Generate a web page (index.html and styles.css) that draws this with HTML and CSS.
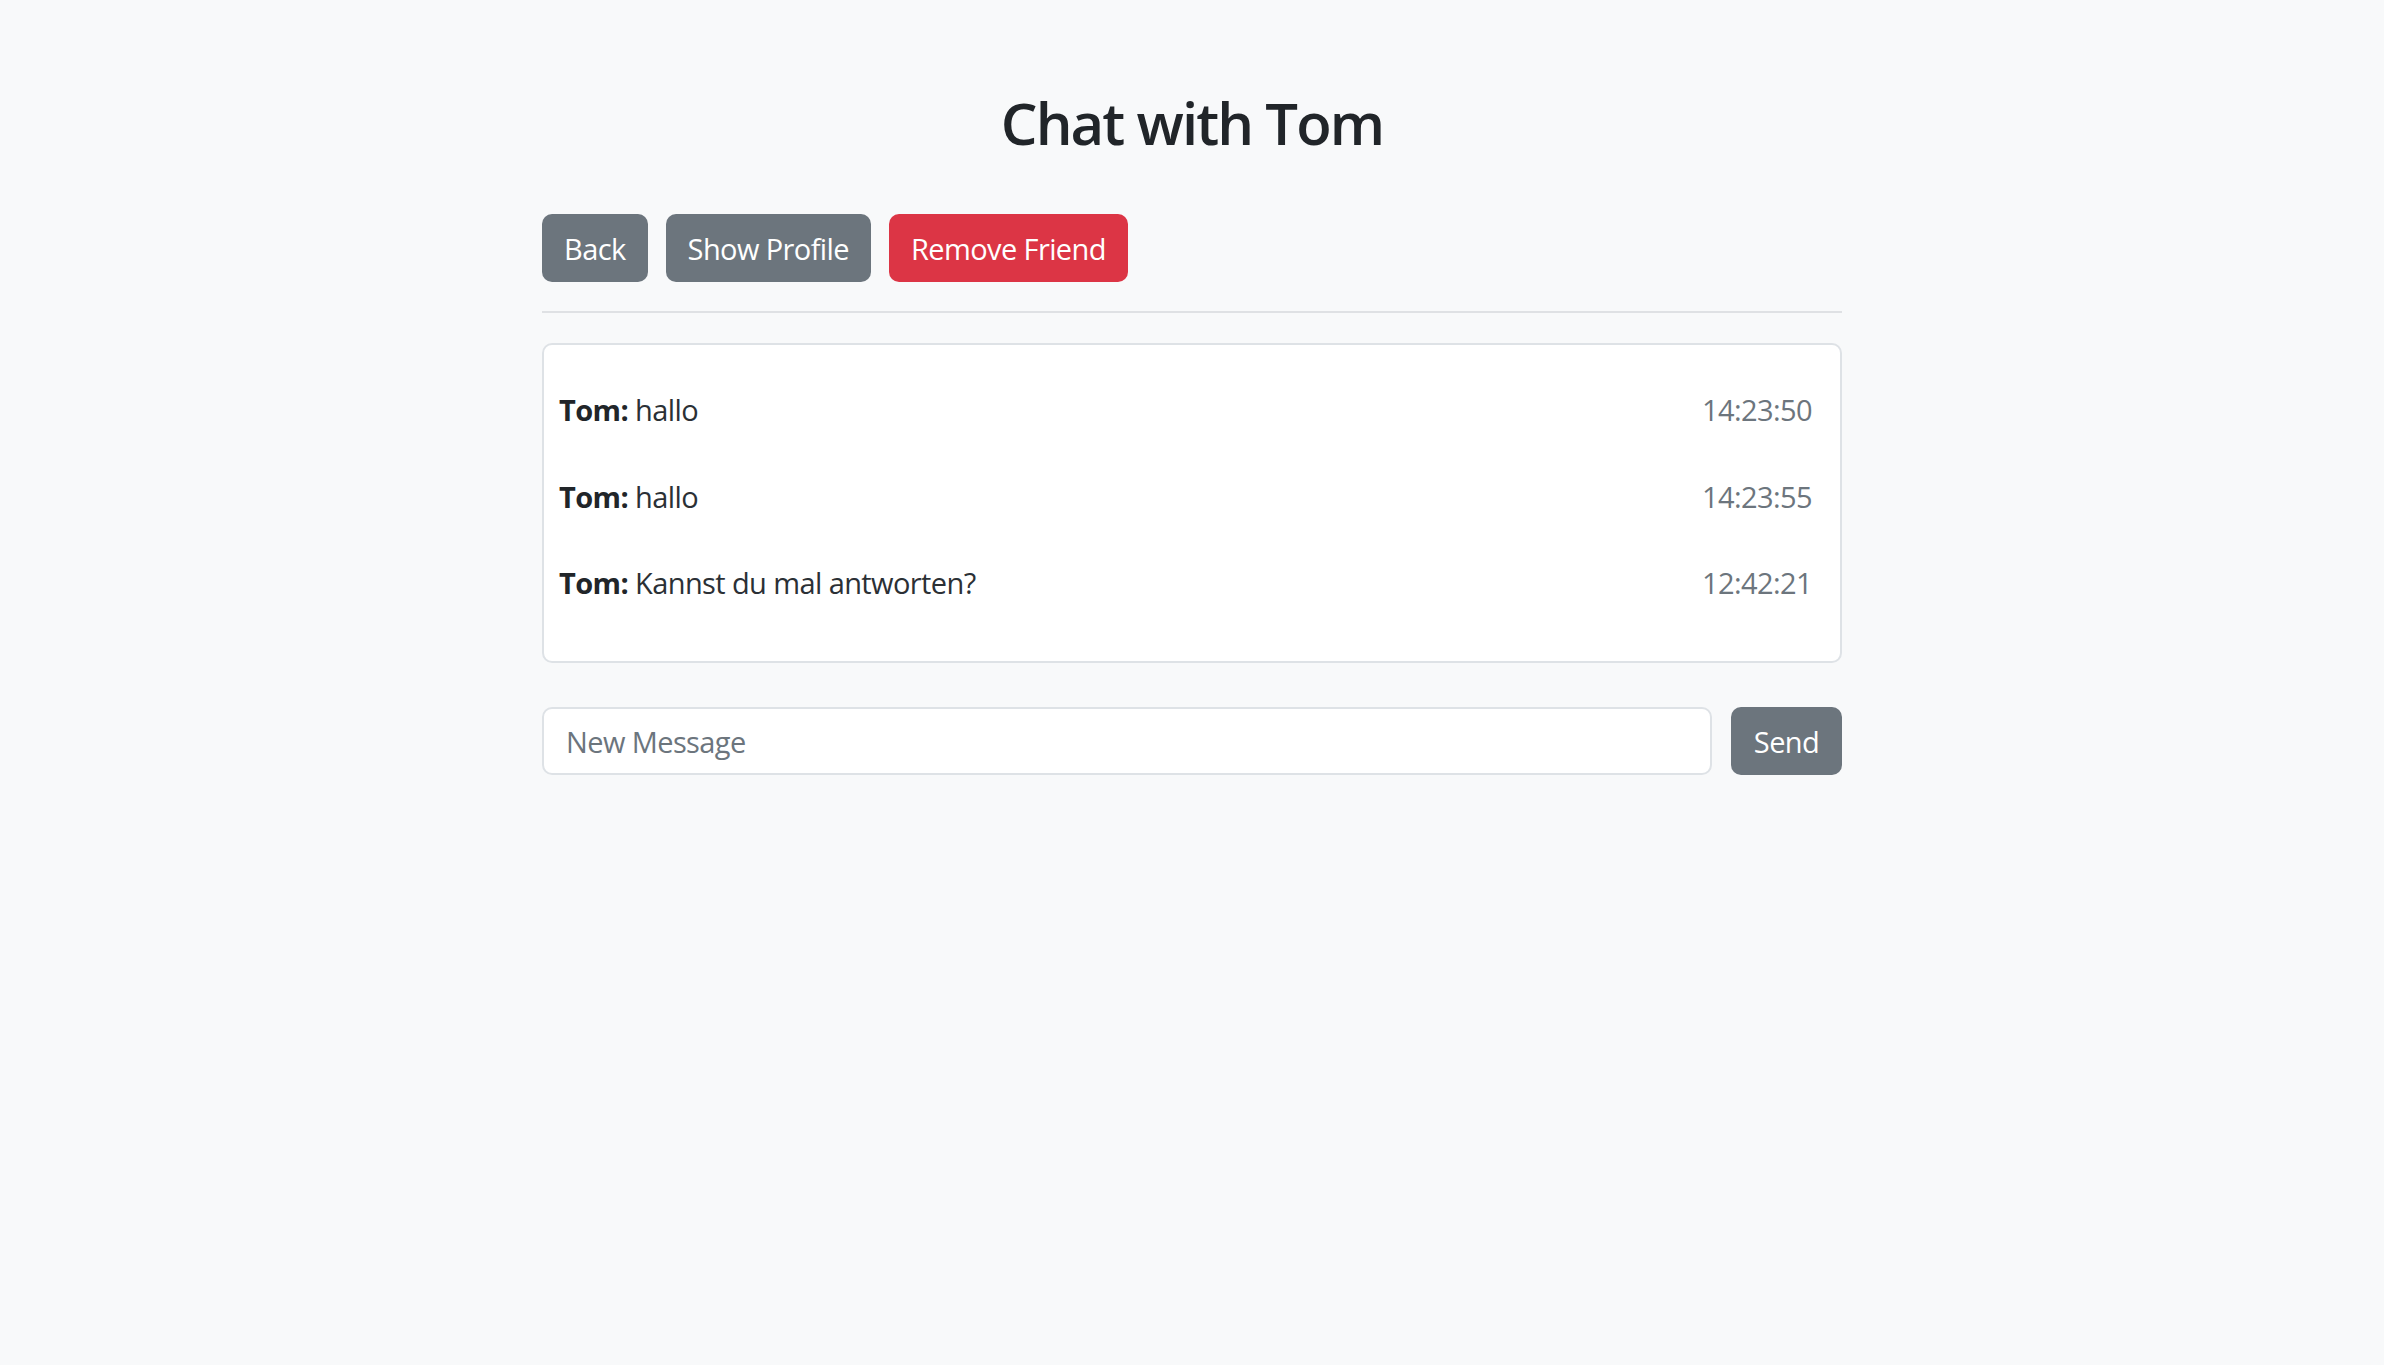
FILE: index.html
```html
<!DOCTYPE html>
<html lang="de">
<head>
<meta charset="utf-8">
<title>Chat with Tom</title>
<link rel="stylesheet" href="styles.css">
</head>
<body>
<main class="container">
  <h1 class="title">Chat with Tom</h1>
  <div class="actions">
    <button class="btn btn-secondary">Back</button>
    <button class="btn btn-secondary">Show Profile</button>
    <button class="btn btn-danger">Remove Friend</button>
  </div>
  <hr class="divider">
  <section class="chat-card">
    <div class="msg">
      <span class="msg-text"><strong>Tom:</strong> hallo</span>
      <span class="msg-time">14:23:50</span>
    </div>
    <div class="msg">
      <span class="msg-text"><strong>Tom:</strong> hallo</span>
      <span class="msg-time">14:23:55</span>
    </div>
    <div class="msg">
      <span class="msg-text"><strong>Tom:</strong> Kannst du mal antworten?</span>
      <span class="msg-time">12:42:21</span>
    </div>
  </section>
  <form class="composer">
    <input class="composer-input" type="text" placeholder="New Message">
    <button class="btn btn-secondary send" type="button">Send</button>
  </form>
</main>
</body>
</html>
```
FILE: styles.css
```css
html, body {
  margin: 0;
  padding: 0;
  background: #f8f9fa;
}
body {
  font-family: "Open Sans", "Noto Sans", "Liberation Sans", sans-serif;
  color: #212529;
  font-size: 29px;
}
.container {
  width: 1300px;
  margin: 0 auto;
  padding-top: 88px;
}
.title {
  margin: 0 0 57px;
  font-size: 58px;
  line-height: 69px;
  font-weight: 600;
  text-align: center;
  letter-spacing: -1.9px;
}
.actions {
  display: flex;
  gap: 18px;
}
.btn {
  height: 68px;
  padding: 0 22px;
  border: 0;
  border-radius: 10px;
  font-family: inherit;
  font-size: 29px;
  line-height: 43px;
  color: #fff;
  letter-spacing: -0.6px;
  cursor: pointer;
}
.btn-secondary { background: #6c757d; }
.btn-danger { background: #dc3545; }
.divider {
  margin: 29px 0 30px;
  border: 0;
  border-top: 2px solid #dfe1e4;
  height: 0;
}
.chat-card {
  box-sizing: border-box;
  height: 320px;
  background: #fff;
  border: 2px solid #dee2e6;
  border-radius: 10px;
  padding: 43px 28px 0 15px;
  display: flex;
  flex-direction: column;
  gap: 43.5px;
}
.msg {
  display: flex;
  justify-content: space-between;
  line-height: 43px;
  letter-spacing: -0.6px;
}
.msg-text { color: #2b3035; }
.msg-text strong { font-weight: 700; color: #212529; }
.msg-time { color: #6c757d; }
.composer {
  display: flex;
  gap: 19px;
  margin-top: 44px;
  height: 68px;
}
.composer-input {
  flex: 1;
  box-sizing: border-box;
  height: 68px;
  border: 2px solid #dee2e6;
  border-radius: 10px;
  background: #fff;
  padding: 0 22px;
  font-family: inherit;
  font-size: 29px;
  color: #212529;
  letter-spacing: -0.6px;
  outline: none;
}
.composer-input::placeholder { color: #6c757d; }
.send {
  width: 111px;
  padding: 0;
}
```
